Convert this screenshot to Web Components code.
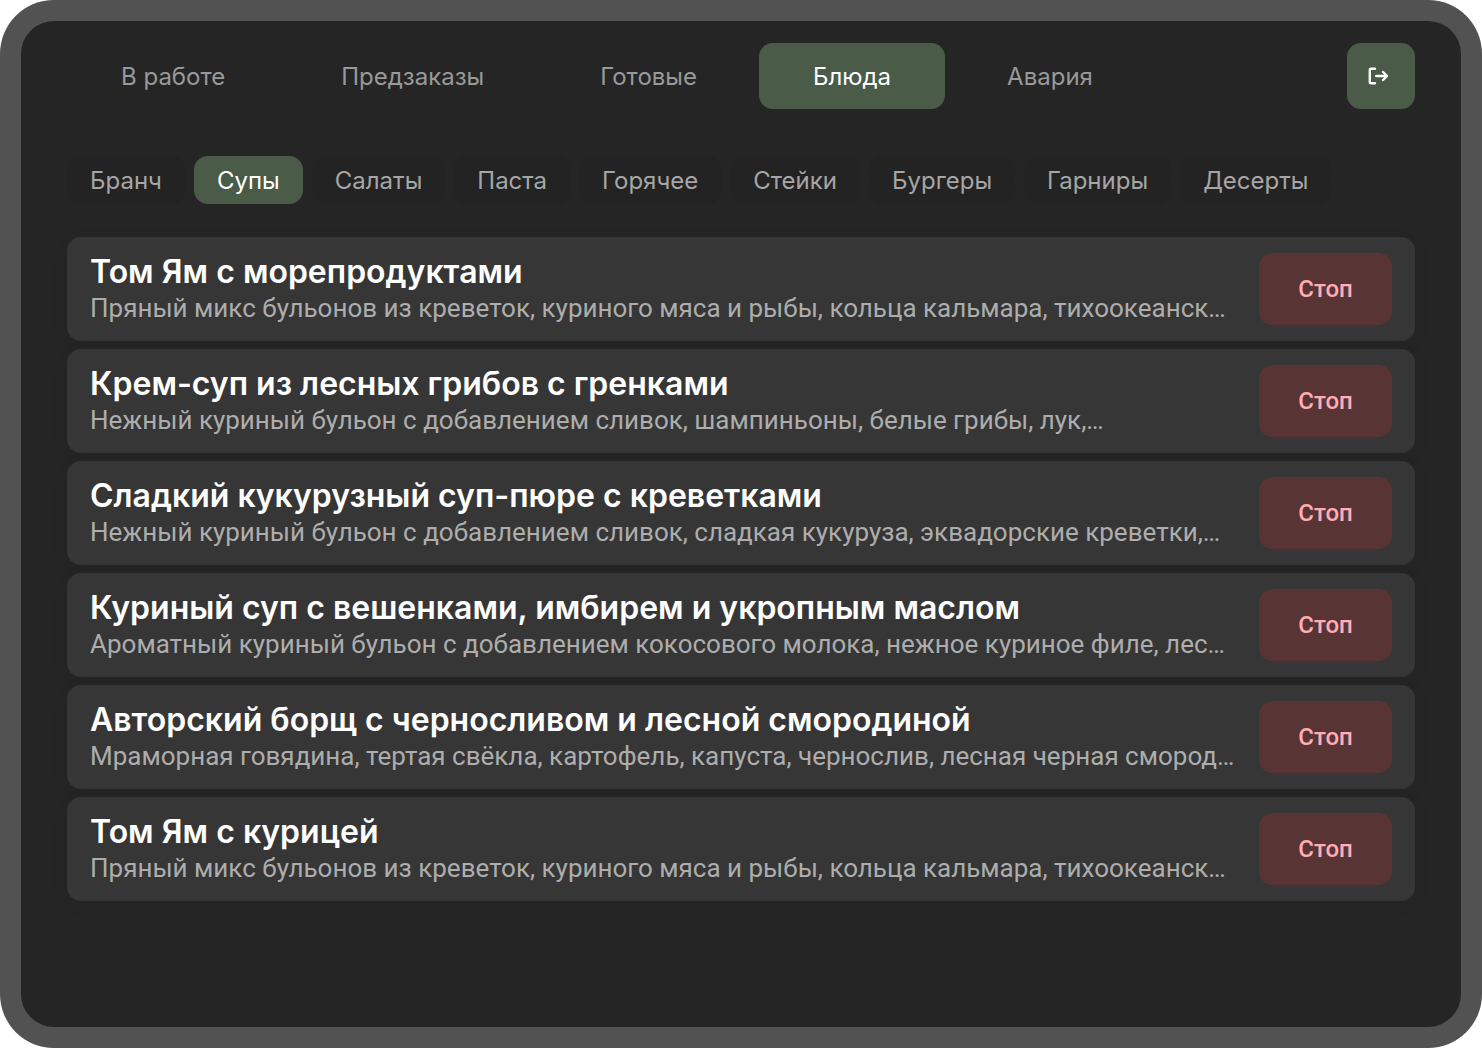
<!DOCTYPE html>
<html lang="ru">
<head>
<meta charset="utf-8">
<meta name="viewport" content="width=device-width, initial-scale=1">
<title>Кухня — блюда</title>
<style>
  :root {
    --frame: #525252;
    --bg: #252525;
    --chip: #232323;
    --card: #363636;
    --accent: #4a5b48;
    --danger: #593434;
    --danger-text: #ffadb5;
    --muted: #999999;
    --chip-text: #a6a6a6;
    --desc: #adadad;
    --radius: 14px;
  }
  html { background: #ffffff; }
  body { margin: 0; font-family: Inter, sans-serif; color: #ffffff; }
</style>
</head>
<body>
<kitchen-screen>
  <top-bar slot="header">
    <main-tab>В работе</main-tab>
    <main-tab>Предзаказы</main-tab>
    <main-tab>Готовые</main-tab>
    <main-tab active>Блюда</main-tab>
    <main-tab>Авария</main-tab>
    <logout-button slot="end"></logout-button>
  </top-bar>
  <category-bar slot="filters">
    <category-chip>Бранч</category-chip>
    <category-chip active>Супы</category-chip>
    <category-chip>Салаты</category-chip>
    <category-chip>Паста</category-chip>
    <category-chip>Горячее</category-chip>
    <category-chip>Стейки</category-chip>
    <category-chip>Бургеры</category-chip>
    <category-chip>Гарниры</category-chip>
    <category-chip>Десерты</category-chip>
  </category-bar>
  <dish-card>
    <span slot="title">Том Ям с морепродуктами</span>
    Пряный микс бульонов из креветок, куриного мяса и рыбы, кольца кальмара, тихоокеанск…
  </dish-card>
  <dish-card>
    <span slot="title">Крем-суп из лесных грибов с гренками</span>
    Нежный куриный бульон с добавлением сливок, шампиньоны, белые грибы, лук,…
  </dish-card>
  <dish-card>
    <span slot="title">Сладкий кукурузный суп-пюре с креветками</span>
    Нежный куриный бульон с добавлением сливок, сладкая кукуруза, эквадорские креветки,…
  </dish-card>
  <dish-card>
    <span slot="title">Куриный суп с вешенками, имбирем и укропным маслом</span>
    Ароматный куриный бульон с добавлением кокосового молока, нежное куриное филе, лес…
  </dish-card>
  <dish-card>
    <span slot="title">Авторский борщ с черносливом и лесной смородиной</span>
    Мраморная говядина, тертая свёкла, картофель, капуста, чернослив, лесная черная смород…
  </dish-card>
  <dish-card>
    <span slot="title">Том Ям с курицей</span>
    Пряный микс бульонов из креветок, куриного мяса и рыбы, кольца кальмара, тихоокеанск…
  </dish-card>
</kitchen-screen>

<script>
  const define = (name, html) => {
    const template = document.createElement('template');
    template.innerHTML = html;
    customElements.define(name, class extends HTMLElement {
      constructor() {
        super();
        this.attachShadow({ mode: 'open' }).append(template.content.cloneNode(true));
      }
      connectedCallback() {
        const button = this.shadowRoot.querySelector('button[data-toggle]');
        if (button) button.setAttribute('aria-pressed', this.hasAttribute('active'));
      }
    });
  };

  define('kitchen-screen', `
    <style>
      :host { display: flex; box-sizing: border-box; min-height: 100vh; padding: 21px;
              background: var(--frame); border-radius: 54px; }
      .screen { flex: 1; min-width: 0; box-sizing: border-box; padding: 22px 46px;
                background: var(--bg); border-radius: 33px; display: flex; flex-direction: column; }
      main { display: flex; flex-direction: column; gap: 8px; margin-top: 33px; }
      .filters { margin-top: 47px; }
    </style>
    <div class="screen">
      <header><slot name="header"></slot></header>
      <div class="filters"><slot name="filters"></slot></div>
      <main><slot></slot></main>
    </div>`);

  define('top-bar', `
    <style>
      :host { display: flex; align-items: center; justify-content: space-between; }
      nav { display: flex; gap: 8px; }
    </style>
    <nav aria-label="Разделы"><slot></slot></nav>
    <slot name="end"></slot>`);

  define('main-tab', `
    <style>
      :host { display: block; }
      button { font: 400 24px/32px Inter, sans-serif; color: var(--muted); background: none;
               border: 0; margin: 0; padding: 18px 54px 16px; border-radius: var(--radius);
               display: block; white-space: nowrap; cursor: pointer; }
      :host([active]) button { color: #fff; background: var(--accent); }
    </style>
    <button type="button" data-toggle><slot></slot></button>`);

  define('logout-button', `
    <style>
      :host { display: block; }
      button { display: flex; align-items: center; border: 0; margin: 0; padding: 21px 24px 21px 20px;
               background: var(--accent); border-radius: var(--radius); cursor: pointer; }
      svg { display: block; }
    </style>
    <button type="button" aria-label="Выйти">
      <svg width="24" height="24" viewBox="0 0 24 24" fill="none" stroke="#fff"
           stroke-width="2.4" stroke-linecap="round" stroke-linejoin="round">
        <path d="M8 4.7H4.1Q2.8 4.7 2.8 6V18Q2.8 19.3 4.1 19.3H8"/>
        <path d="M9.2 12H20M16 8L20 12L16 16"/>
      </svg>
    </button>`);

  define('category-bar', `
    <style>
      :host { display: block; }
      nav { display: flex; gap: 9px; }
    </style>
    <nav aria-label="Категории"><slot></slot></nav>`);

  define('category-chip', `
    <style>
      :host { display: block; }
      button { font: 400 24px/32px Inter, sans-serif; color: var(--chip-text); background: var(--chip);
               border: 0; margin: 0; padding: 9px 23px 7px; border-radius: var(--radius);
               display: block; white-space: nowrap; cursor: pointer; }
      :host([active]) button { color: #fff; background: var(--accent); }
    </style>
    <button type="button" data-toggle><slot></slot></button>`);

  define('dish-card', `
    <style>
      :host { display: block; }
      article { display: flex; align-items: center; gap: 24px; padding: 16px 23px;
                background: var(--card); border-radius: var(--radius);
                box-shadow: 0 4px 24px rgba(0, 0, 0, 0.03); }
      .text { flex: 1; min-width: 0; }
      h2, p { margin: 0; white-space: nowrap; overflow: hidden; text-overflow: ellipsis; }
      h2 { font: 600 32px/38px Inter, sans-serif; color: #fff; }
      p { font: 400 26px/34px Roboto, sans-serif; color: var(--desc); }
      button { font: 500 24px/32px Roboto, sans-serif; color: var(--danger-text);
               background: var(--danger); border: 0; margin: 0; min-width: 133px; padding: 20px 24px;
               border-radius: var(--radius); cursor: pointer; }
    </style>
    <article>
      <div class="text">
        <h2><slot name="title"></slot></h2>
        <p><slot></slot></p>
      </div>
      <button type="button">Стоп</button>
    </article>`);
</script>
</body>
</html>
